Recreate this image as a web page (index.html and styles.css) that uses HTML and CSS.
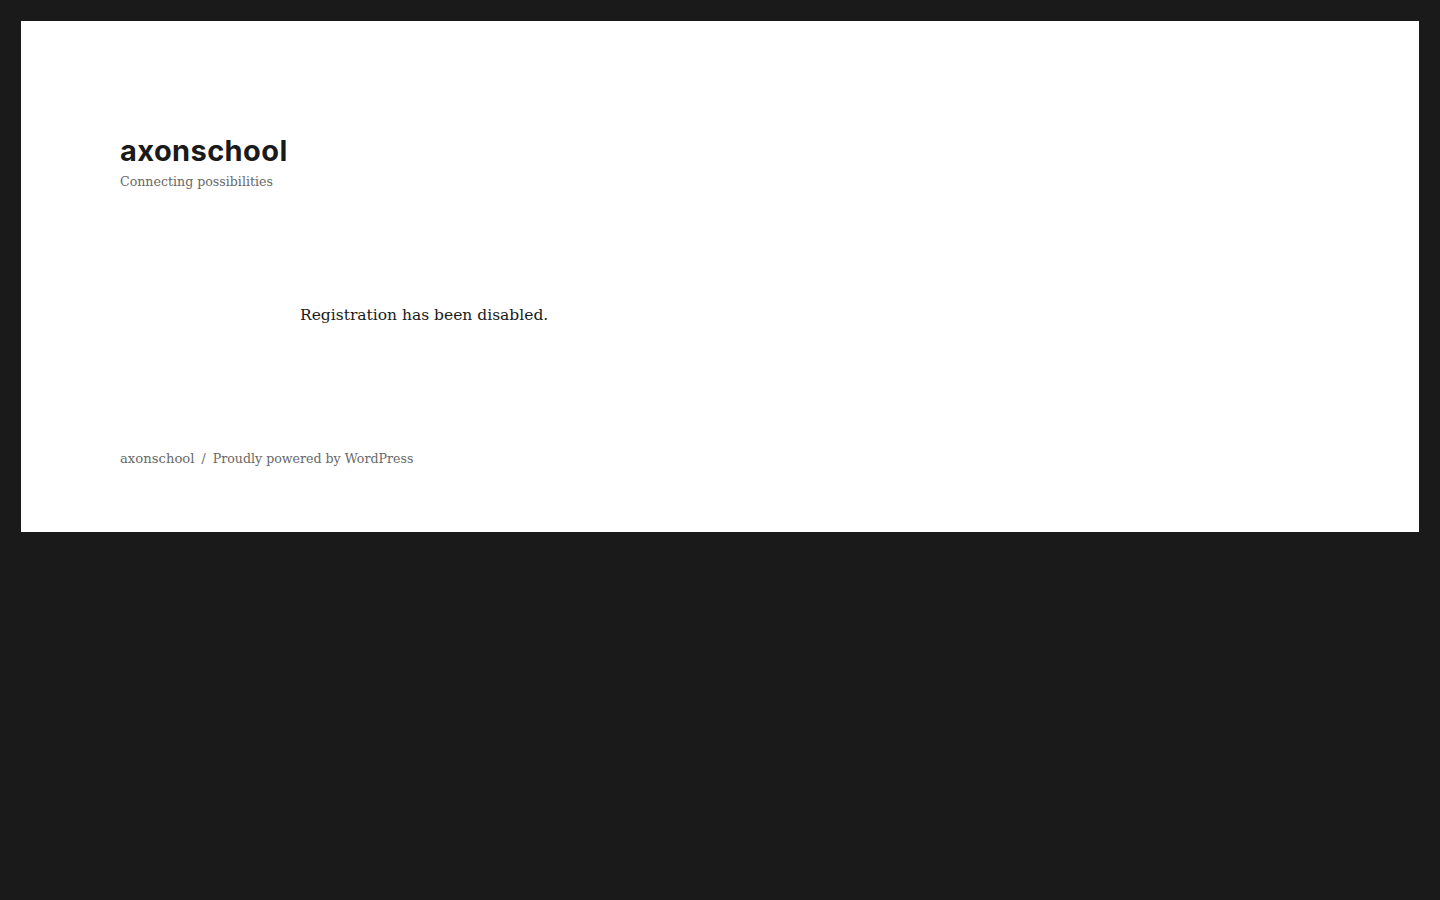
FILE: index.html
```html
<!DOCTYPE html>
<html lang="en">
<head>
<meta charset="utf-8">
<title>axonschool</title>
<link rel="stylesheet" href="styles.css">
</head>
<body>
<div class="site">
  <header class="site-header">
    <p class="site-title"><a href="#">axonschool</a></p>
    <p class="site-description">Connecting possibilities</p>
  </header>
  <main class="site-main">
    <p class="notice">Registration has been disabled.</p>
  </main>
  <footer class="site-footer">
    <span class="site-name">axonschool</span>
    <span class="sep">/</span>
    <a href="#" class="powered">Proudly powered by WordPress</a>
  </footer>
</div>
</body>
</html>
```
FILE: styles.css
```css
html, body {
  margin: 0;
  padding: 0;
}
body {
  background: #1a1a1a;
  padding: 21px;
  min-height: 100vh;
  box-sizing: border-box;
  font-family: "DejaVu Serif", "Liberation Serif", serif;
  color: #1a1a1a;
}
.site {
  background: #fff;
  padding: 112px 99px 63px;
  display: flex;
  flex-direction: column;
}
.site-header p {
  margin: 0;
}
.site-title {
  font-family: Inter, "Noto Sans", sans-serif;
  font-weight: 700;
  font-size: 29px;
  letter-spacing: 0.4px;
  line-height: 35px;
}
.site-title a {
  color: #1a1a1a;
  text-decoration: none;
}
.site-description {
  margin-top: 3px !important;
  font-size: 12.6px;
  line-height: 21px;
  color: #686868;
}
.site-main {
  padding: 109px 0 0 180px;
}
.notice {
  margin: 0;
  font-size: 15.5px;
  line-height: 28px;
  color: #1a1a1a;
}
.site-footer {
  margin-top: 119px;
  display: flex;
  align-items: center;
  gap: 6px;
  font-size: 12.6px;
  line-height: 21px;
  color: #686868;
}
.site-name {
  font-size: 13.2px;
}
.site-footer a {
  color: #686868;
  text-decoration: none;
}
.sep {
  color: #686868;
  padding: 0 1px;
}
```
